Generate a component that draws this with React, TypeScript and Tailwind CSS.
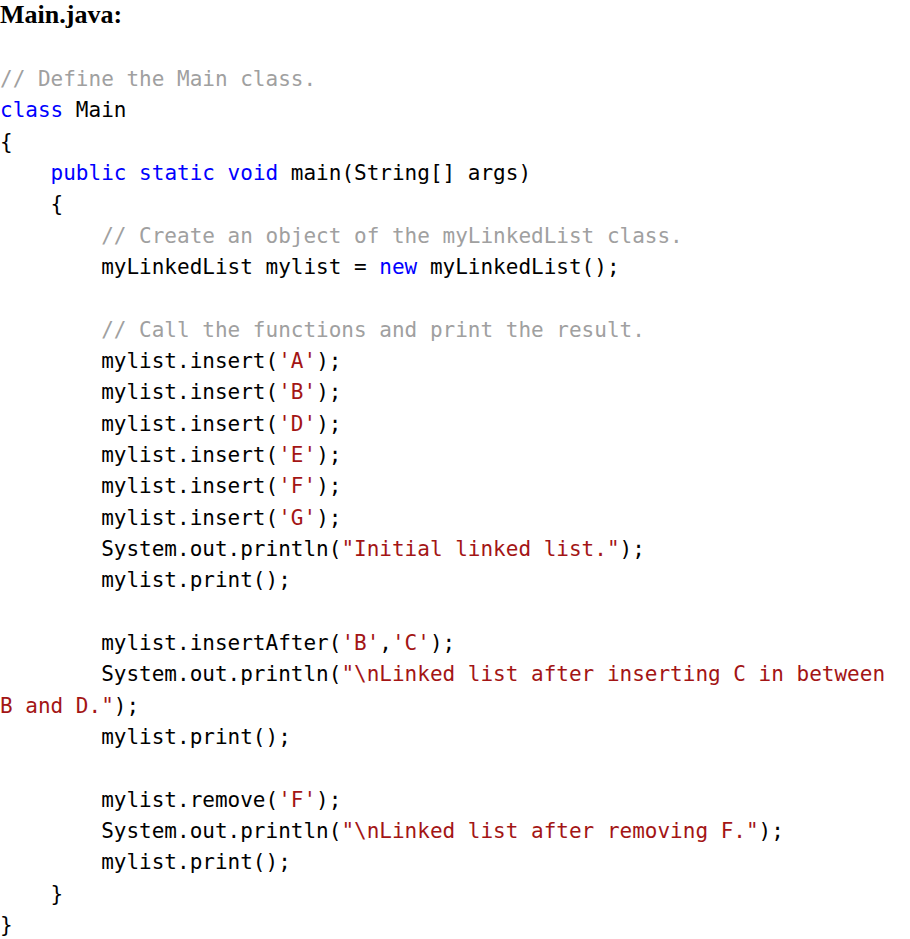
const K = ({ children }: { children: React.ReactNode }) => <span className="text-[#0000ff]">{children}</span>;
const S = ({ children }: { children: React.ReactNode }) => <span className="text-[#a31515]">{children}</span>;
const C = ({ children }: { children: React.ReactNode }) => <span className="text-[#a0a0a0]">{children}</span>;

const inserts = ["A", "B", "D", "E", "F", "G"];

export default function App() {
  return (
    <div className="min-h-screen w-[910px] bg-white text-black">
      <h1 className="mb-[35px] font-['Liberation_Serif',serif] text-[26px] font-bold leading-[29px]">Main.java:</h1>
      <pre className="whitespace-pre-wrap font-['DejaVu_Sans_Mono',monospace] text-[21px] leading-[31.33px]">
        <C>// Define the Main class.</C>
        {"\n"}
        <K>class</K> Main{"\n"}
        {"{\n"}
        {"    "}
        <K>public</K> <K>static</K> <K>void</K> main(String[] args){"\n"}
        {"    {\n"}
        {"        "}
        <C>// Create an object of the myLinkedList class.</C>
        {"\n"}
        {"        myLinkedList mylist = "}
        <K>new</K> myLinkedList();{"\n"}
        {"\n"}
        {"        "}
        <C>// Call the functions and print the result.</C>
        {"\n"}
        {inserts.map((c) => (
          <span key={c}>
            {"        mylist.insert("}
            <S>'{c}'</S>);{"\n"}
          </span>
        ))}
        {"        System.out.println("}
        <S>"Initial linked list."</S>);{"\n"}
        {"        mylist.print();\n"}
        {"\n"}
        {"        mylist.insertAfter("}
        <S>'B'</S>,<S>'C'</S>);{"\n"}
        {"        System.out.println("}
        <S>"\nLinked list after inserting C in between B and D."</S>);{"\n"}
        {"        mylist.print();\n"}
        {"\n"}
        {"        mylist.remove("}
        <S>'F'</S>);{"\n"}
        {"        System.out.println("}
        <S>"\nLinked list after removing F."</S>);{"\n"}
        {"        mylist.print();\n"}
        {"    }\n"}
        {"}"}
      </pre>
    </div>
  );
}
